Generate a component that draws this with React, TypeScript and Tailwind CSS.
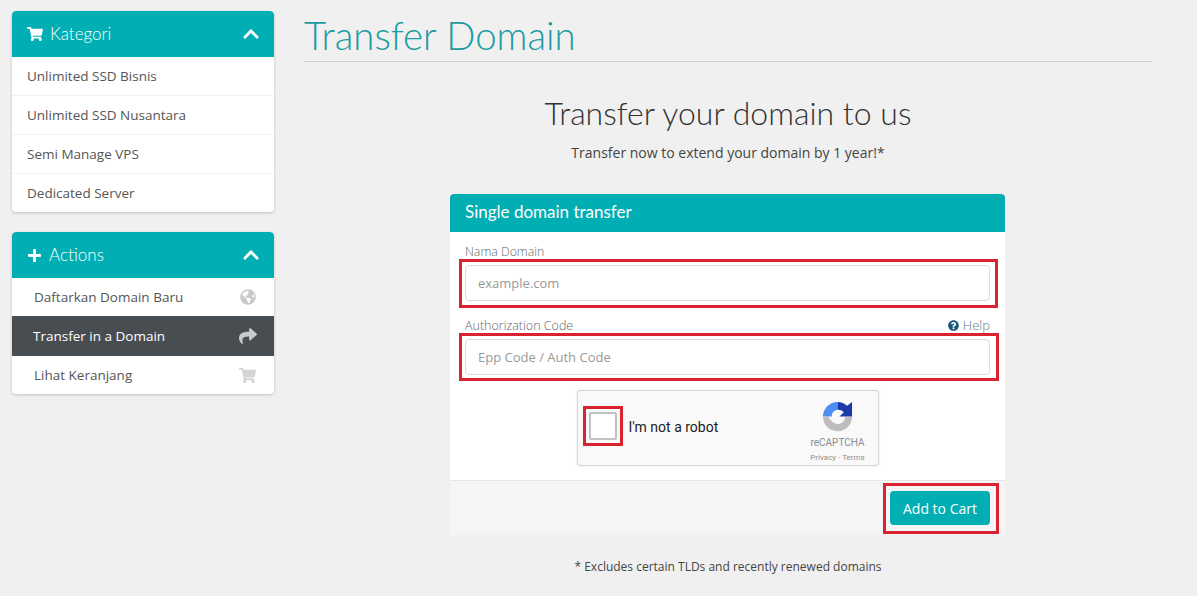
import React from 'react';
import { FaShoppingCart, FaChevronUp, FaPlus, FaGlobeAmericas, FaShare, FaQuestionCircle } from 'react-icons/fa';

const HEAD_FONT = "font-['Lato','Open_Sans',sans-serif]";

// Red annotation drawn over the screenshot
const RedBox = ({ className }: { className: string }) => (
  <div className={`absolute border-[3px] border-[#d9232e] pointer-events-none ${className}`} />
);

const PanelHeader = ({ icon, title }: { icon: React.ReactNode; title: string }) => (
  <div className="flex h-[46px] items-center justify-between rounded-t bg-[#00aeb3] pl-[15px] pr-[14px] text-white">
    <div className="flex items-center">
      {icon}
      <span className={`text-[17px] font-light ${HEAD_FONT}`}>{title}</span>
    </div>
    <FaChevronUp className="text-[18px]" />
  </div>
);

const categories = [
  { name: 'Unlimited SSD Bisnis', rowClass: 'h-[39px] border-b border-[#f2f2f2]' },
  { name: 'Unlimited SSD Nusantara', rowClass: 'h-[39px] border-b border-[#f2f2f2]' },
  { name: 'Semi Manage VPS', rowClass: 'h-[39px] border-b border-[#f2f2f2]' },
  { name: 'Dedicated Server', rowClass: 'h-[38px]' },
];

const RecaptchaLogo = () => (
  <svg width="31" height="31" viewBox="0 0 32 32">
    <path d="M16 1 A15 15 0 0 0 1 16 H10 A6.5 6.5 0 0 1 16 9 Z" fill="#4a90f2" />
    <path d="M16 1 A15 15 0 0 1 26 5 L31 1 V16 H18 L22.5 11.5 A8 8 0 0 0 16 9 Z" fill="#1c3aa9" />
    <path d="M1 16 H6 L10 21 A8 8 0 0 0 24 16.5 H31 A15 15 0 0 1 1 16 Z" fill="#bdbdbd" />
  </svg>
);

export default function App() {
  return (
    <div className="flex h-[596px] w-[1197px] overflow-hidden bg-[#f0f0f0] pl-3 pt-[11px] font-['Open_Sans',sans-serif] text-[#58595b]">
      <aside className="w-[262px] shrink-0">
        <div className="overflow-hidden rounded bg-white shadow-[0_1px_3px_rgba(0,0,0,0.2)]">
          <PanelHeader icon={<FaShoppingCart className="mr-[7px] text-[16px]" />} title="Kategori" />
          {categories.map((item) => (
            <div key={item.name} className={`flex items-center px-[15px] text-[13.5px] text-[#555] ${item.rowClass}`}>
              {item.name}
            </div>
          ))}
        </div>

        <div className="mt-5 overflow-hidden rounded bg-white shadow-[0_1px_3px_rgba(0,0,0,0.2)]">
          <PanelHeader icon={<FaPlus className="mr-[7px] text-[15px]" />} title="Actions" />
          <div className="flex h-[38px] items-center justify-between pl-[22px] pr-[18px] text-[13.5px] text-[#555]">
            Daftarkan Domain Baru
            <FaGlobeAmericas className="text-[16px] text-[#c9c9c9]" />
          </div>
          <div className="flex h-[40px] items-center justify-between bg-[#484d52] pl-[21px] pr-[17px] text-[13.5px] text-white">
            Transfer in a Domain
            <FaShare className="text-[18px] text-[#c9c9c9]" />
          </div>
          <div className="flex h-[38px] items-center justify-between pl-[22px] pr-[18px] text-[13.5px] text-[#555]">
            Lihat Keranjang
            <FaShoppingCart className="text-[17px] text-[#d4d4d4]" />
          </div>
        </div>
      </aside>

      <main className="ml-[30px] w-[848px] shrink-0">
        <h1 className={`-mt-[2px] h-[53px] border-b border-[#cfcfcf] text-[38.4px] font-light leading-[52px] text-[#1a9ba1] ${HEAD_FONT}`}>
          Transfer Domain
        </h1>

        <div className="text-center">
          <h2 className={`mt-[32px] text-[32px] font-light leading-[38px] text-[#333] ${HEAD_FONT}`}>
            Transfer your domain to us
          </h2>
          <p className="mt-[11px] text-[14px] leading-[20px] text-[#444]">Transfer now to extend your domain by 1 year!*</p>
        </div>

        <div className="ml-[146px] mt-[31px] w-[555px] overflow-hidden rounded bg-white">
          <div className={`flex h-[38px] items-center bg-[#00aeb3] px-[15px] pb-[2px] text-[17px] text-white ${HEAD_FONT}`}>
            Single domain transfer
          </div>

          <div className="h-[248px] px-[15px] pt-[12px]">
            <label className="block text-[12.3px] font-light leading-[15px] text-[#666]">Nama Domain</label>
            <div className="relative mt-[6px]">
              <RedBox className="-bottom-[7px] -left-[6px] -right-[8px] -top-[6px]" />
              <div className="flex h-[36px] items-center rounded border border-[#dcdcdc] px-[12px] pt-[2px] text-[13px] text-[#999]">
                example.com
              </div>
            </div>

            <div className="mt-[17px] flex items-end justify-between text-[12.5px] font-light leading-[15px] text-[#666]">
              <label>Authorization Code</label>
              <span className="flex items-center text-[13px] text-[#5a7d8c]">
                <FaQuestionCircle className="mr-1 text-[11px] text-[#1b5577]" />
                Help
              </span>
            </div>
            <div className="relative mt-[6px]">
              <RedBox className="-bottom-[6px] -left-[6px] -right-[9px] -top-[6px]" />
              <div className="flex h-[36px] items-center rounded border border-[#dcdcdc] px-[12px] pt-[2px] text-[13px] text-[#999]">
                Epp Code / Auth Code
              </div>
            </div>

            <div className="mx-auto mt-[15px] flex h-[76px] w-[302px] items-center rounded-[3px] border border-[#d6d6d6] bg-[#f9f9f9] pl-[11px] pr-[12px] font-['Roboto',sans-serif] shadow-[0_0_3px_rgba(0,0,0,0.1)]">
              <div className="relative mb-[4px] h-[28px] w-[28px] rounded-[2px] border-2 border-[#c1c1c1] bg-white">
                <RedBox className="-inset-[8px]" />
              </div>
              <span className="mb-[2px] ml-[12px] text-[14px] text-[#222]">I'm not a robot</span>
              <div className="ml-auto mt-[8px] flex w-[56px] flex-col items-center text-[#8d8d8d]">
                <RecaptchaLogo />
                <span className="mt-[5px] text-[10px] leading-[12px]">reCAPTCHA</span>
                <span className="mt-[3px] whitespace-nowrap text-[8px] leading-[11px]">Privacy - Terms</span>
              </div>
            </div>
          </div>

          <div className="flex h-[55px] items-start justify-end border-t border-[#e5e5e5] bg-[#f5f5f5] pr-[15px] pt-[10px]">
            <div className="relative">
              <RedBox className="-bottom-[9px] -left-[7px] -right-[9px] -top-[8px]" />
              <button className="h-[34px] w-[100px] rounded bg-[#00aeb3] text-[14px] text-white">Add to Cart</button>
            </div>
          </div>
        </div>

        <p className="mt-[23px] text-center text-[12px] leading-[17px] text-[#444]">
          * Excludes certain TLDs and recently renewed domains
        </p>
      </main>
    </div>
  );
}
